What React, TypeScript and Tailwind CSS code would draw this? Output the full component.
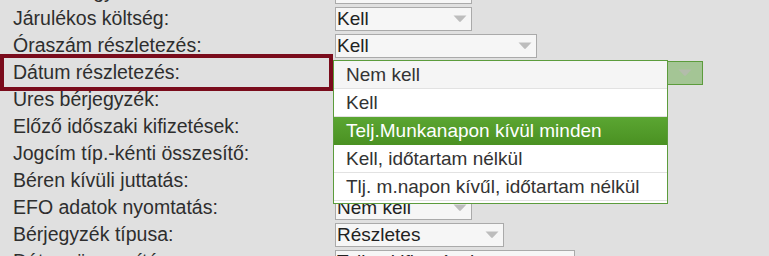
const ROWS: { label: string; value?: string; width?: number }[] = [
  { label: 'Tételes egyeztetés:', value: 'Kell', width: 137 },
  { label: 'Járulékos költség:', value: 'Kell', width: 137 },
  { label: 'Óraszám részletezés:', value: 'Kell', width: 202 },
  { label: 'Dátum részletezés:' },
  { label: 'Üres bérjegyzék:' },
  { label: 'Előző időszaki kifizetések:' },
  { label: 'Jogcím típ.-kénti összesítő:' },
  { label: 'Béren kívüli juttatás:' },
  { label: 'EFO adatok nyomtatás:', value: 'Nem kell', width: 137 },
  { label: 'Bérjegyzék típusa:', value: 'Részletes', width: 169 },
  { label: 'Dátum összesítés:', value: 'Teljes kifizetések', width: 240 },
];

const OPTIONS = [
  'Nem kell',
  'Kell',
  'Telj.Munkanapon kívül minden',
  'Kell, időtartam nélkül',
  'Tlj. m.napon kívűl, időtartam nélkül',
];

function Caret({ className }: { className: string }) {
  return (
    <svg width="14" height="8" viewBox="0 0 14 8" className={className}>
      <path d="M0.5 0.5 L13.5 0.5 L7.8 6.6 Q7 7.4 6.2 6.6 Z" fill="currentColor" />
    </svg>
  );
}

function Select({ value, width }: { value: string; width: number }) {
  return (
    <div
      className="flex h-[24px] items-center justify-between border border-[#aaaaaa] bg-[#f6f6f6] pl-[1px] pr-[4px] text-[19px] text-[#222]"
      style={{ width }}
    >
      <span className="leading-none">{value}</span>
      <Caret className="text-[#bdbdbd]" />
    </div>
  );
}

function Dropdown() {
  return (
    <div className="absolute left-[333px] top-[60px] z-10 w-[335px] border border-[#5c9c3c] bg-white pb-[2px] text-[19px] text-[#333]">
      {OPTIONS.map((o, i) => (
        <div
          key={o}
          className={
            i === 2
              ? 'flex h-[28px] items-center bg-gradient-to-b from-[#5ba632] to-[#4a9122] pl-[12px] pt-[1px] text-white'
              : `flex h-[28px] items-center border-b border-[#e2e2e2] pl-[12px] pt-[1px] ${i === 0 ? 'bg-[#f5f5f5]' : 'bg-white'}`
          }
        >
          {o}
        </div>
      ))}
    </div>
  );
}

export default function App() {
  return (
    <div
      className="relative h-[256px] overflow-hidden bg-[#e0e0e0] text-[#2e2e2e]"
      style={{ fontFamily: '"Liberation Sans", Arial, sans-serif' }}
    >
      <div className="-mt-[22px] flex flex-col">
        {ROWS.map((r, i) => (
          <div key={i} className="flex h-[27px] items-center">
            <div className="w-[335px] shrink-0 pl-[13px] text-[19.5px]">{r.label}</div>
            {r.value && r.width ? <Select value={r.value} width={r.width} /> : null}
            {i === 3 ? (
              <div className="flex h-[24px] w-[368px] justify-end">
                <div className="flex w-[36px] items-center justify-center border border-[#5c9c3c] bg-[#a4c595]">
                  <Caret className="text-[#b3bcab]" />
                </div>
              </div>
            ) : null}
          </div>
        ))}
      </div>
      <div className="pointer-events-none absolute left-0 top-[54px] h-[37px] w-[333px] border-[4px] border-[#7a0c1c]" />
      <Dropdown />
    </div>
  );
}
